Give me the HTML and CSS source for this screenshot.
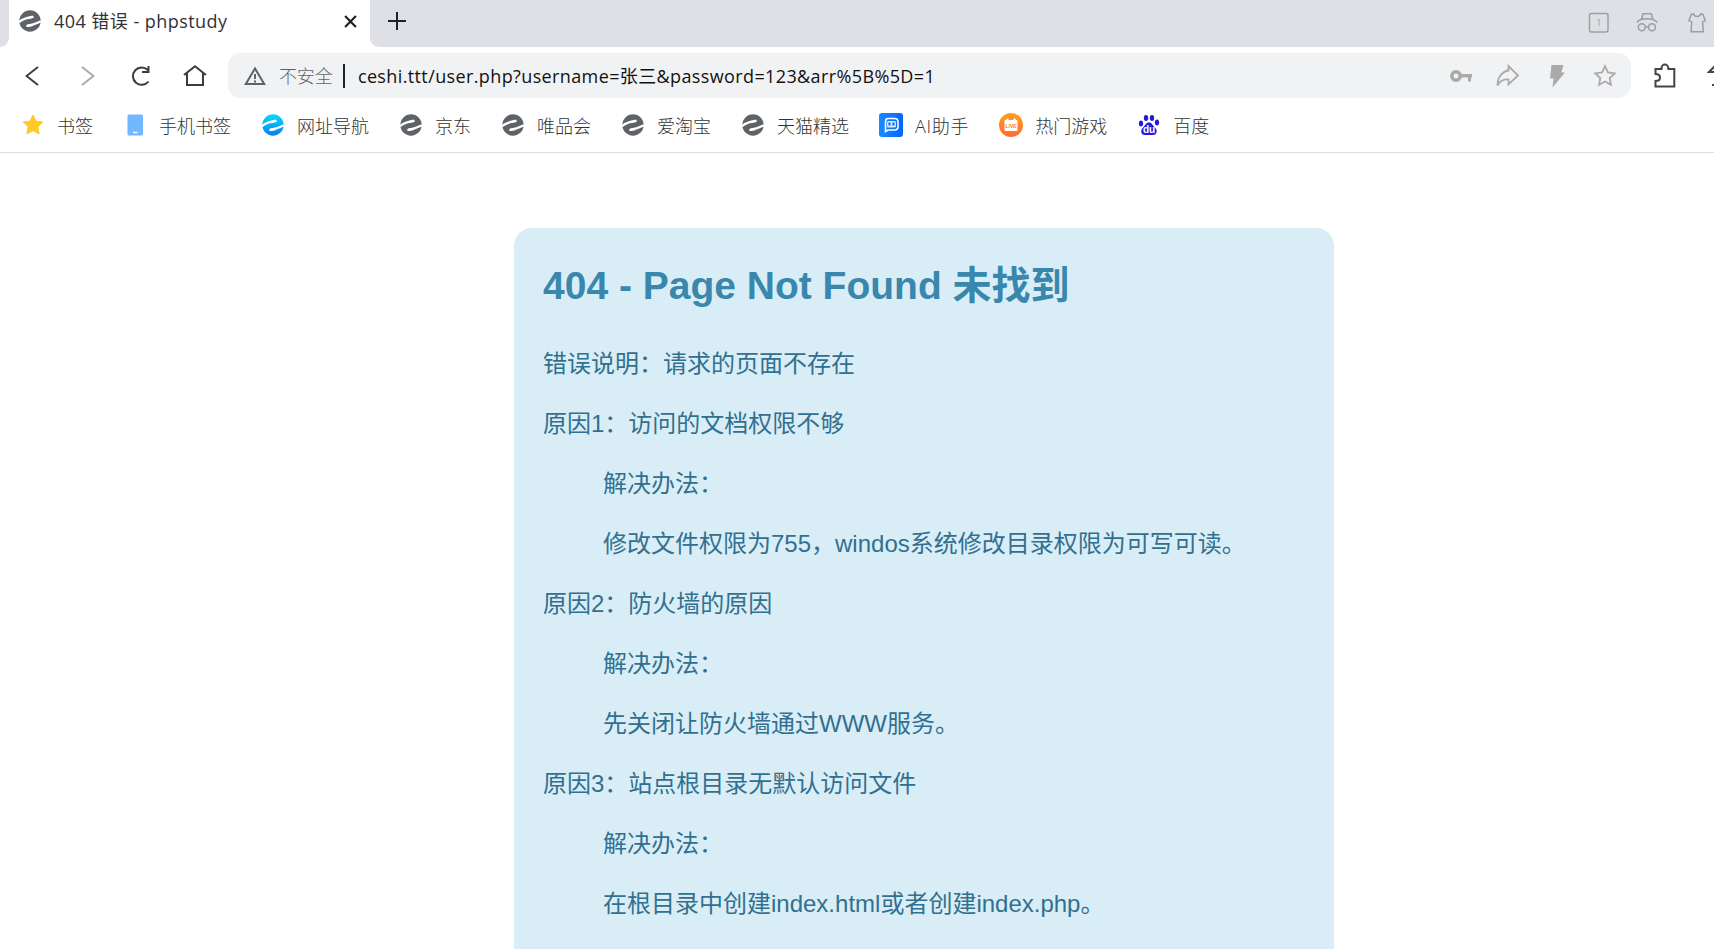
FILE: index.html
```html
<!DOCTYPE html>
<html lang="zh-CN">
<head>
    <meta charset="UTF-8">
    <meta name="viewport" content="width=device-width, initial-scale=1.0">
    <title>404 错误 - phpstudy</title>
    <link rel="stylesheet" href="styles.css">
</head>
<body>
    <!-- shared icons -->
    <svg class="defs" width="0" height="0">
        <symbol id="globe" viewBox="0 0 22 22">
            <circle cx="11" cy="11" r="10.700"/>
            <path d="M0 12.200C3 9.300 8.500 7.800 14 6.700" fill="none" stroke="#fff" stroke-width="2.300"/>
            <path d="M12 6.100c2.800-.2 3.800.8 2.200 1.900L9 9.300z" fill="#fff"/>
            <path d="M22 11.300C18 13.500 13 15 8 15.800" fill="none" stroke="#fff" stroke-width="2.200"/>
            <path d="M10 14.300c-3.300.8-4 2-2 2.600 2 .4 5-.4 7-1.300z" fill="#fff"/>
        </symbol>
    </svg>

    <!-- tab strip -->
    <div class="tabs">
        <div class="tab-prev"></div>
        <div class="tab">
            <svg class="tab-icon"><use href="#globe"/></svg>
            <span class="tab-title">404 错误 - phpstudy</span>
            <svg class="tab-close" viewBox="0 0 12 12"><path d="M1 1l10 10M11 1L1 11"/></svg>
        </div>
        <div class="tab-rest">
            <svg class="tab-add" viewBox="0 0 18 18"><path d="M9 0v18M0 9h18"/></svg>
            <div class="window-icons">
                <svg width="22" height="22" viewBox="0 0 22 22"><rect x="1.500" y="1.500" width="18.500" height="18.500" rx="2"/><text x="8.300" y="14">1</text></svg>
                <svg width="22" height="22" viewBox="0 0 22 22"><path d="M5.500 7L7 1.700h8.300L16.800 7M.7 10.500C3 7.600 6.800 6.800 11 6.800s8 .8 10.300 3.700M9.500 15h3"/><circle cx="5.800" cy="15.300" r="3.500"/><circle cx="16" cy="15.300" r="3.500"/></svg>
                <svg class="shirt" width="18" height="22" viewBox="0 0 18 22"><path d="M5.500 2c1 3.300 6.200 3.300 7.200 0L15 2.500l2.300 6.200-2.800 1.200.9 9.900H3l.8-9.900L1 8.700l2.200-6.200z"/></svg>
            </div>
        </div>
    </div>

    <!-- address bar -->
    <div class="toolbar">
        <div class="nav">
            <svg width="14" height="20" viewBox="0 0 14 20"><path d="M13 1L1.500 10 13 19"/></svg>
            <svg class="off" width="14" height="20" viewBox="0 0 14 20"><path d="M1 1l11.500 9L1 19"/></svg>
            <svg width="20" height="22" viewBox="0 0 20 22"><path d="M17.500 16.500A8.700 8.700 0 1 1 16.800 5M17.500 1v6h-6.500"/></svg>
            <svg class="home" width="24" height="22" viewBox="0 0 24 22"><path d="M1 10L12 1.300 23 10M4 8v12h16V8"/></svg>
        </div>
        <div class="address">
            <svg class="warn" viewBox="0 0 22 20"><path d="M11 2.500L20.200 18H1.800zM11 8v5M11 14.500v2"/></svg>
            <span class="insecure">不安全</span>
            <span class="bar"></span>
            <span class="url">ceshi.ttt/user.php?username=张三&amp;password=123&amp;arr%5B%5D=1</span>
            <div class="actions">
                <svg width="22" height="22" viewBox="0 0 22 22"><circle class="key" cx="6" cy="11" r="4.200"/><path class="solid" d="M10 9h12v3.500h-1v4h-3v-4h-8z"/></svg>
                <svg class="share" width="24" height="24" viewBox="0 0 24 24"><path d="M12.500 6.500V2l9.500 9.500-9.500 9v-5C7 15 3.500 17.500 1.500 21.500 1.500 13 6 7.500 12.500 6.500z"/></svg>
                <svg class="bolt" width="16" height="24" viewBox="0 0 16 24"><path class="solid" d="M2.500 1h12l-2.200 7.500H16L3.500 23.500l1-9H1z"/></svg>
                <svg width="24" height="24" viewBox="0 0 24 24"><path d="M12 2.200l2.900 6.200 6.800.9-5 4.700 1.300 6.800-6-3.300-6 3.300L7.300 14l-5-4.700 6.800-.9z"/></svg>
            </div>
        </div>
        <svg class="puzzle" width="22" height="25" viewBox="0 0 22 25"><path d="M1.500 6h6V5a3.400 3.400 0 0 1 6.800 0v1h6v17.500H1.500v-5.500c6 0 6-7 0-7z"/></svg>
        <svg class="restore" width="7" height="24" viewBox="0 0 7 24"><path d="M8 2L2 8h6M5 21h3"/></svg>
    </div>

    <!-- bookmarks -->
    <div class="bookmarks">
        <div class="bookmark"><svg viewBox="0 0 24 24"><path fill="#ffc926" stroke="#ffc926" stroke-linejoin="round" d="M12 2l3 6.200 6.800.8-5 4.800 1.300 7.200-6.100-3.500L5.900 21l1.300-7.200-5-4.800L9 8.200z"/></svg><span>书签</span></div>
        <div class="bookmark"><svg viewBox="0 0 24 24"><rect x="4.500" y="1.500" width="15.500" height="21" rx="1.500" fill="#71b8ff"/><path d="M10 19.500h4.500" stroke="#fff" stroke-width="1.300"/></svg><span>手机书签</span></div>
        <div class="bookmark"><svg viewBox="0 0 24 24"><defs><linearGradient id="sky" x2="0" y2="1"><stop stop-color="#00ddff"/><stop offset="1" stop-color="#087fed"/></linearGradient></defs><use href="#globe" x="1" y="1" width="22" height="22" fill="url(#sky)"/></svg><span>网址导航</span></div>
        <div class="bookmark"><svg viewBox="0 0 24 24"><use href="#globe" x="1" y="1" width="22" height="22"/></svg><span>京东</span></div>
        <div class="bookmark"><svg viewBox="0 0 24 24"><use href="#globe" x="1" y="1" width="22" height="22"/></svg><span>唯品会</span></div>
        <div class="bookmark"><svg viewBox="0 0 24 24"><use href="#globe" x="1" y="1" width="22" height="22"/></svg><span>爱淘宝</span></div>
        <div class="bookmark"><svg viewBox="0 0 24 24"><use href="#globe" x="1" y="1" width="22" height="22"/></svg><span>天猫精选</span></div>
        <div class="bookmark"><svg viewBox="0 0 24 24"><defs><linearGradient id="ai" x2="1"><stop stop-color="#168cff"/><stop offset="1" stop-color="#0765ff"/></linearGradient></defs><rect width="24" height="24" rx="3" fill="url(#ai)"/><path d="M9 5.500h6.500q3.500 0 3.500 3.500v4.500q0 3.500-3.500 3.500H9l-2.500 1.500V9q0-3.500 2.500-3.500z" fill="none" stroke="#fff" stroke-width="1.600"/><rect x="8" y="8" width="9" height="6.500" rx="1.500" fill="#d9ecff"/><path d="M10.500 9.500v3M14.500 9.500v3" stroke="#0871f8" stroke-width="2.200"/></svg><span class="latin">AI助手</span></div>
        <div class="bookmark"><svg viewBox="0 0 24 24"><defs><linearGradient id="live" x2="0" y2="1"><stop stop-color="#ffa01c"/><stop offset="1" stop-color="#ff6b35"/></linearGradient></defs><circle cx="12" cy="12" r="12" fill="url(#live)"/><rect x="5.500" y="7" width="13" height="11" rx="1" fill="#fff"/><path d="M8.500 5.500v3M15.500 5.500v3" stroke="#fff" stroke-width="2"/><text class="live" x="6.500" y="15.200">LIVE</text></svg><span>热门游戏</span></div>
        <div class="bookmark"><svg viewBox="0 0 24 24"><g fill="#2319dc"><ellipse cx="4" cy="10.500" rx="2.100" ry="2.900"/><ellipse cx="9" cy="5" rx="2.200" ry="3"/><ellipse cx="15" cy="5" rx="2.200" ry="3"/><ellipse cx="20" cy="9.500" rx="2.100" ry="2.900"/><path d="M12 9.500c3 0 3.500 2.800 6 5 2.800 2.800 2 7.500-2 7.500H8c-4.500 0-4.700-5-2-7.500 2.500-2.200 3-5 6-5z"/></g><text class="du" x="6" y="20">du</text></svg><span>百度</span></div>
    </div>

    <div class="content">
        <h1>404 - Page Not Found 未找到</h1>
        <p>错误说明：请求的页面不存在</p>
        <p>原因1：访问的文档权限不够</p>
        <p class="indent">解决办法：</p>
        <p class="indent">修改文件权限为755，windos系统修改目录权限为可写可读。</p>
        <p>原因2：防火墙的原因</p>
        <p class="indent">解决办法：</p>
        <p class="indent">先关闭让防火墙通过WWW服务。</p>
        <p>原因3：站点根目录无默认访问文件</p>
        <p class="indent">解决办法：</p>
        <p class="indent">在根目录中创建index.html或者创建index.php。</p>
    </div>
</body>
</html>
```
FILE: styles.css
```css
* {
    box-sizing: border-box;
}
body {
    margin: 0;
    background: #fff;
    font-family: "Open Sans", "Noto Sans CJK SC", sans-serif;
    white-space: nowrap;
}
svg {
    display: block;
    flex: none;
    fill: none;
}
.defs { position: absolute; }

.tabs {
    display: flex;
    height: 47px;
}
.tab-prev {
    width: 9px;
    background: #dee0e5;
    border-bottom-right-radius: 9px;
}
.tab {
    display: flex;
    align-items: center;
    width: 361px;
    height: 42px;
    padding: 0 13px 0 10px;
}
.tab-icon {
    width: 22px;
    height: 22px;
    fill: #5f6368;
}
.tab-title {
    margin-left: 13px;
    padding-bottom: 3px;
    flex: 1;
    font-size: 18px;
    letter-spacing: 0.45px;
    color: #303134;
}
.tab-close {
    width: 13px;
    height: 13px;
    stroke: #202124;
    stroke-width: 2;
}
.tab-rest {
    display: flex;
    flex: 1;
    justify-content: space-between;
    padding: 12px 8px 0 18px;
    background: #dee0e5;
    border-bottom-left-radius: 9px;
}
.tab-add {
    width: 18px;
    height: 18px;
    stroke: #202124;
    stroke-width: 2;
}
.window-icons {
    display: flex;
    gap: 26px;
    stroke: #9c9ea2;
    stroke-width: 1.5;
}
.window-icons text {
    font-size: 9px;
    stroke: none;
    fill: #9c9ea2;
}
.shirt { margin-left: 4px; }

.toolbar {
    display: flex;
    align-items: center;
    height: 57px;
    padding-left: 25px;
}
.nav {
    display: flex;
    align-items: center;
    gap: 36px;
    width: 203px;
    stroke: #3c3c3c;
    stroke-width: 2;
}
.nav svg:nth-child(1) { margin-right: 6px; }
.nav .home { margin-left: -4px; }
.off { stroke: #aaa; }
.address {
    display: flex;
    align-items: center;
    width: 1404px;
    height: 45px;
    padding: 0 14px 0 16px;
    border-radius: 13px;
    background: #f1f2f4;
    font-size: 18px;
}
.warn {
    width: 22px;
    height: 20px;
    stroke: #5f6368;
    stroke-width: 2;
}
.insecure {
    margin-left: 13px;
    padding-bottom: 1px;
    font-weight: 300;
    color: #5f6368;
}
.bar {
    width: 2px;
    height: 24px;
    margin: 0 13px 0 10px;
    background: #202124;
}
.url {
    flex: 1;
    padding-bottom: 2px;
    letter-spacing: 0.38px;
    color: #111;
}
.actions {
    display: flex;
    align-items: center;
    gap: 26px;
    stroke: #aaa;
    stroke-width: 1.8;
}
.share { margin: 0 3px 0 -2px; }
.bolt { margin-right: 2px; }
.key { stroke-width: 3.5; }
.solid {
    fill: #aaa;
    stroke: none;
}
.puzzle {
    margin-left: 23px;
    stroke: #444;
    stroke-width: 2;
}
.restore {
    margin-left: 31px;
    stroke: #444;
    stroke-width: 2;
}

.bookmarks {
    display: flex;
    align-items: center;
    gap: 30px;
    height: 49px;
    padding: 0 0 7px 21px;
    border-bottom: 1px solid #dedede;
}
.bookmark {
    display: flex;
    align-items: center;
    gap: 12px;
    font-size: 18px;
    font-weight: 300;
    color: #333;
}
.bookmark svg {
    width: 24px;
    height: 24px;
    fill: #5f6368;
}
.latin { letter-spacing: 0.75px; }
.live {
    font: bold 5px "Liberation Sans", sans-serif;
    fill: #ff7a2b;
}
.du {
    font: bold 10px "Liberation Sans", sans-serif;
    fill: #fff;
}

.content {
    width: 820px;
    height: 721px;
    margin: 75px 0 0 514px;
    padding: 31px 29px 0;
    border-radius: 18px 18px 0 0;
    background: #d9edf7;
    color: #31708f;
    font: 24px/36px "Liberation Sans", "Noto Sans CJK SC", sans-serif;
}
.content h1 {
    margin: 0 0 33px;
    font-size: 39px;
    line-height: 54px;
    color: #3a87ad;
}
.content p {
    margin: 0 0 24px;
}
.content p:last-child {
    margin-bottom: 0;
}
.content .indent {
    padding-left: 60px;
}
```
